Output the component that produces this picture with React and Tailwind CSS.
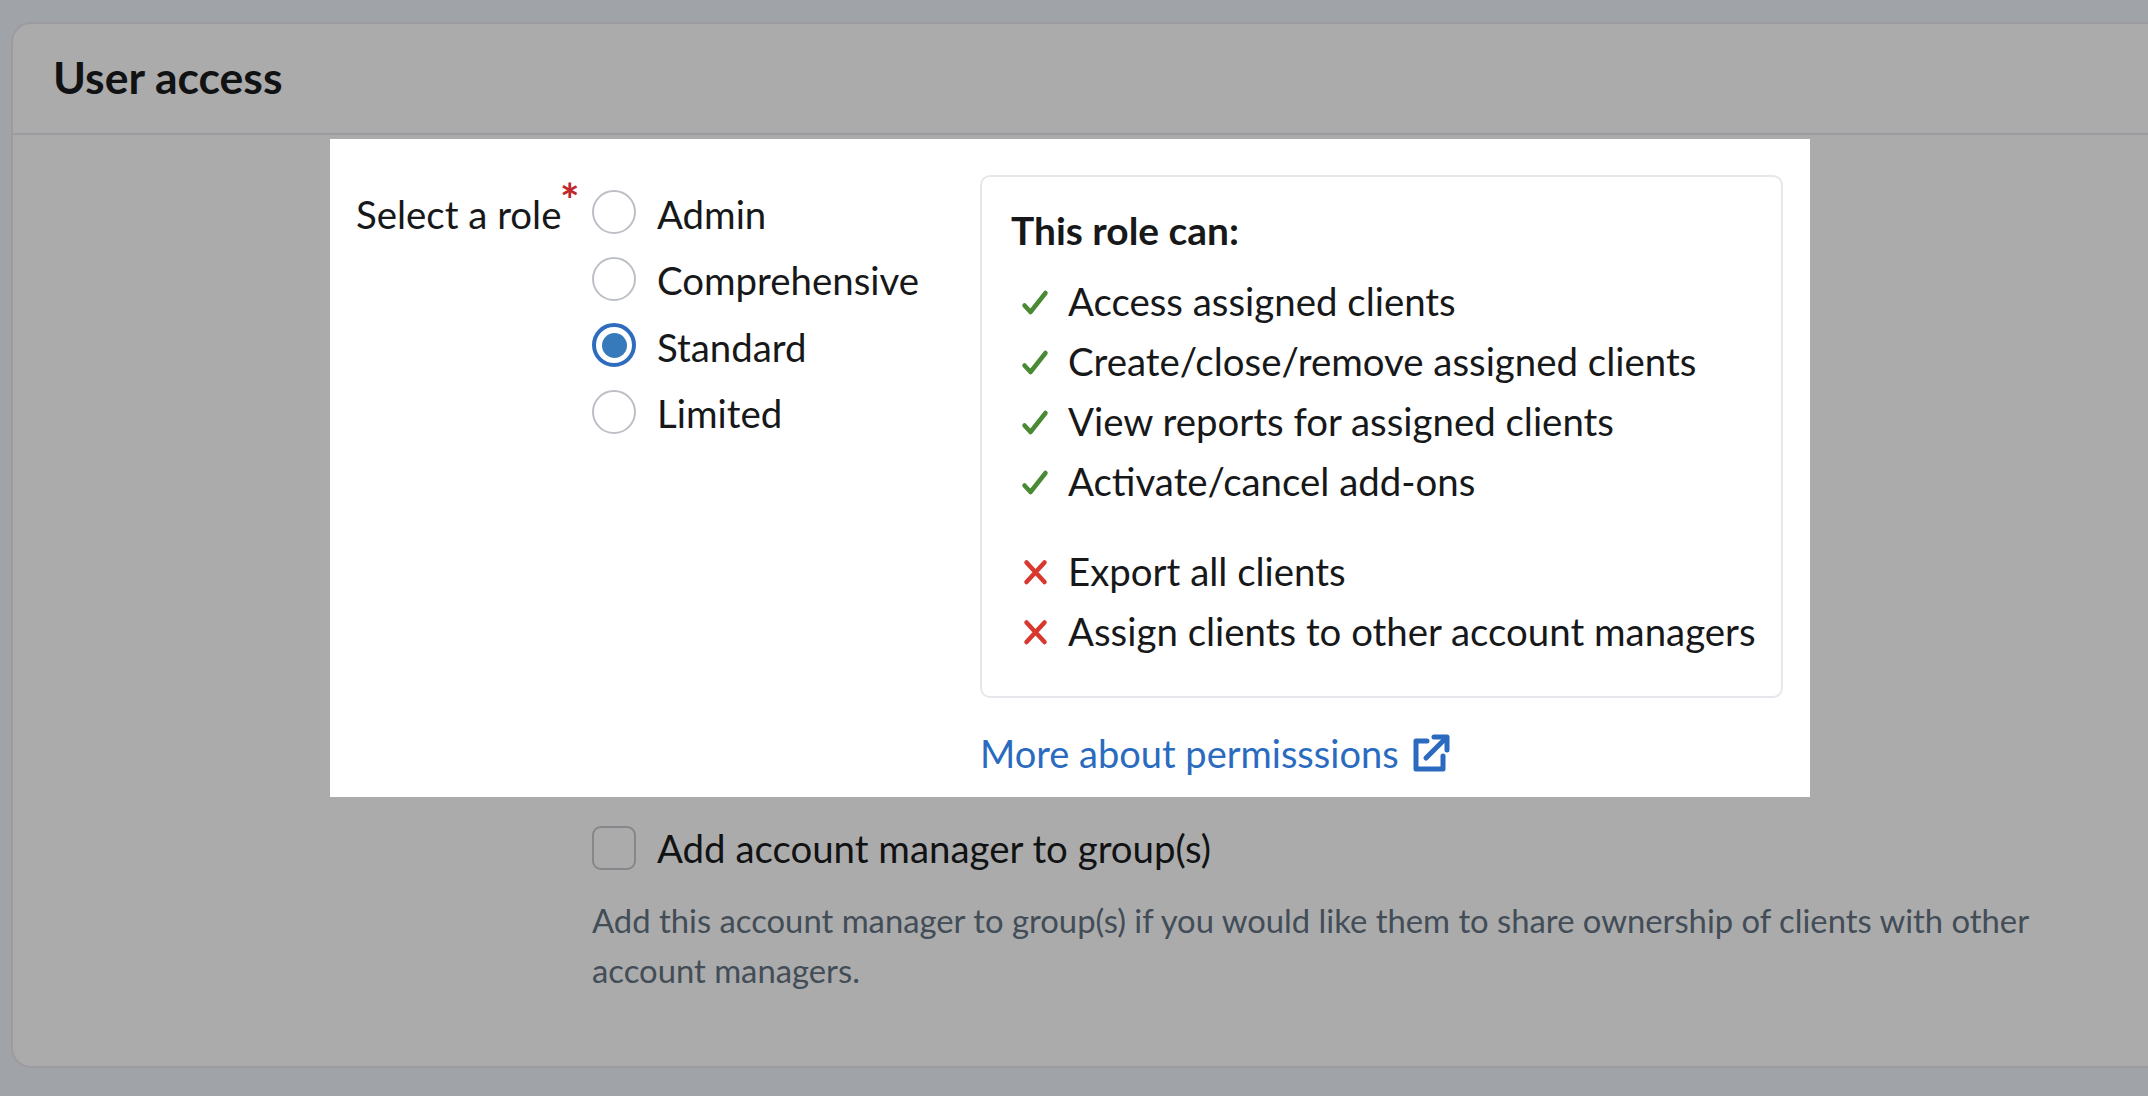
const font = { fontFamily: 'Lato, "Noto Sans", sans-serif' };

const roles = [
  { name: 'Admin' },
  { name: 'Comprehensive' },
  { name: 'Standard', checked: true },
  { name: 'Limited' },
];

const allowed = [
  'Access assigned clients',
  'Create/close/remove assigned clients',
  'View reports for assigned clients',
  'Activate/cancel add-ons',
];

const denied = ['Export all clients', 'Assign clients to other account managers'];

function Tick() {
  return (
    <svg width="28" height="28" viewBox="0 0 28 28" fill="none" className="mt-[4px] shrink-0">
      <path d="M3.5 16.5L9.5 23L24.5 4" stroke="#4b8a35" strokeWidth="4.5" strokeLinecap="round" strokeLinejoin="round" />
    </svg>
  );
}

function Cross() {
  return (
    <svg width="28" height="28" viewBox="0 0 28 28" fill="none" className="ml-[1px] mt-[2px] shrink-0">
      <path d="M4.5 4.5L22.5 24M22.5 4.5L4.5 24" stroke="#d9382e" strokeWidth="4.5" strokeLinecap="round" />
    </svg>
  );
}

function ExternalLink() {
  return (
    <svg width="38" height="38" viewBox="0 0 38 38" fill="none" className="shrink-0">
      <path d="M15 7H4V35H31V22" stroke="#2a6bbf" strokeWidth="5" strokeLinejoin="round" strokeLinecap="round" />
      <path d="M14 24L33 5" stroke="#2a6bbf" strokeWidth="5" strokeLinecap="round" />
      <path d="M22 3H35V16" stroke="#2a6bbf" strokeWidth="5" strokeLinecap="round" strokeLinejoin="round" />
    </svg>
  );
}

function Radio({ name, checked }) {
  return (
    <div className="flex h-[66.5px] items-center">
      {checked ? (
        <span className="flex h-[44px] w-[44px] items-center justify-center rounded-full border-4 border-[#2f6cbd]">
          <span className="h-[25px] w-[25px] rounded-full bg-[#377abb]" />
        </span>
      ) : (
        <span className="h-[44px] w-[44px] rounded-full border-2 border-[#bcc0c6]" />
      )}
      <span className="ml-[21px] pt-[3px] text-[38.4px] leading-[44px] text-[#17181a]">{name}</span>
    </div>
  );
}

function PermRow({ icon, text }) {
  return (
    <li className="flex h-[60px] items-center">
      <span className="ml-[10px] mr-[19px] flex w-[28px]">{icon}</span>
      <span className="whitespace-nowrap text-[38.4px] leading-[44px] text-[#17181a]">{text}</span>
    </li>
  );
}

export default function App() {
  return (
    <div style={font} className="h-[1096px] w-[2148px] overflow-hidden bg-[#a0a3a8] pl-[11px] pt-[22px]">
      <div className="h-[1046px] w-[2300px] rounded-l-[20px] border-2 border-r-0 border-[#9b9ba0] bg-[#ababab]">
        <div className="flex h-[111px] items-center border-b-2 border-[#9b9ba0] pb-[3px] pl-[40px]">
          <h1 className="text-[44.5px] font-bold leading-[50px] text-[#111214]">User access</h1>
        </div>

        <div className="mt-[4px] ml-[317px] flex h-[658px] w-[1480px] bg-white pl-[26px] pt-[36px]">
          <div className="relative w-[236px] pt-[17px] text-[38.4px] leading-[44px] text-[#17181a]">
            Select a role
            <span className="absolute left-[204px] top-[3px] text-[46px] font-bold leading-[44px] text-[#c0272d]">*</span>
          </div>

          <div className="w-[388px] pt-[4px]">
            {roles.map((role) => (
              <Radio key={role.name} name={role.name} checked={role.checked} />
            ))}
          </div>

          <div className="w-[803px]">
            <div className="h-[523px] rounded-[10px] border-2 border-[#e6e7eb] pl-[29px] pt-[30px]">
              <h2 className="text-[38.9px] font-bold leading-[46px] text-[#17181a]">This role can:</h2>
              <ul className="mt-[18px]">
                {allowed.map((text) => (
                  <PermRow key={text} icon={<Tick />} text={text} />
                ))}
              </ul>
              <ul className="mt-[30px]">
                {denied.map((text) => (
                  <PermRow key={text} icon={<Cross />} text={text} />
                ))}
              </ul>
            </div>
            <a className="mt-[33px] flex items-center text-[38px] leading-[44px] text-[#2a6bbf]">
              More about permisssions
              <span className="ml-[13px]"><ExternalLink /></span>
            </a>
          </div>
        </div>

        <div className="ml-[579px] mt-[29px] flex h-[44px] items-center">
          <span className="h-[44px] w-[44px] rounded-[9px] border-2 border-[#85878a]" />
          <span className="ml-[21px] text-[38.4px] leading-[44px] text-[#111214]">Add account manager to group(s)</span>
        </div>

        <p className="ml-[579px] mt-[26px] w-[1480px] text-[32.8px] leading-[50px] text-[#424d57]">
          Add this account manager to group(s) if you would like them to share ownership of clients with other account managers.
        </p>
      </div>
    </div>
  );
}
